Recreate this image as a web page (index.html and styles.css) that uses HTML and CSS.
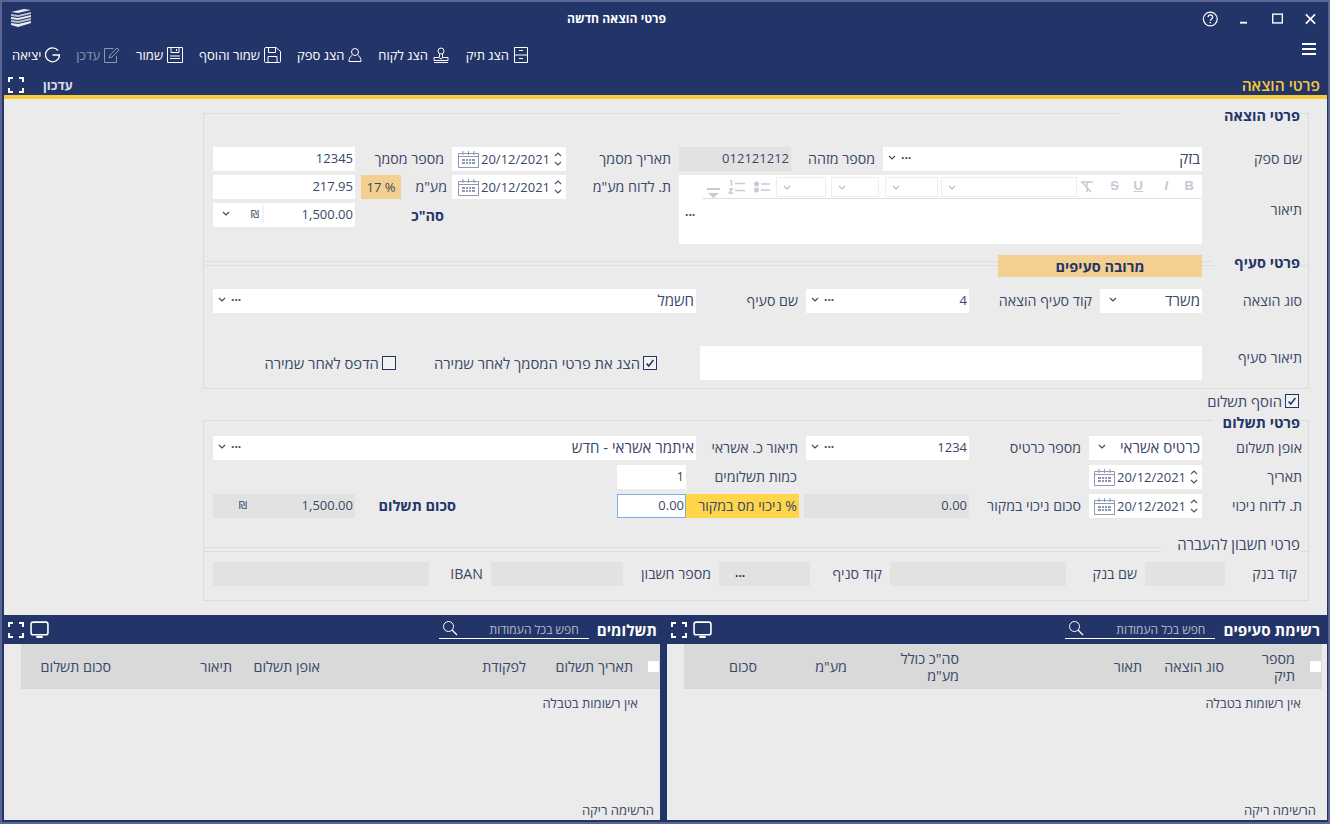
FILE: index.html
```html
<!DOCTYPE html>
<html lang="he" dir="rtl">
<head>
  <meta charset="UTF-8">
  <title>פרטי הוצאה חדשה</title>
  <link rel="stylesheet" href="styles.css">
</head>
<body>
  <svg class="sprites" width="0" height="0">
    <symbol id="i-full" viewBox="0 0 16 16"><path d="M1 5V1h4M11 1h4v4M15 11v4h-4M5 15H1v-4" fill="none" stroke="#fff" stroke-width="2"/></symbol>
    <symbol id="i-screen" viewBox="0 0 18 16"><rect x="1" y="1" width="16" height="12" rx="2" fill="none" stroke="#fff" stroke-width="1.5"/><path d="M6 15h6" stroke="#fff" stroke-width="2"/></symbol>
    <symbol id="i-search" viewBox="0 0 16 16"><circle cx="6.5" cy="6.5" r="5" fill="none" stroke="#fff"/><path d="M10 10l5 5" stroke="#fff" stroke-width="1.2"/></symbol>
    <symbol id="i-cal" viewBox="0 0 21 18"><path d="M.5 3.5h20v14H.5zM.5 6.5h20M5 1v4M10.500 1v4M16 1v4" fill="none" stroke="#8f98b2"/><path d="M4 9h3v2H4zM8 9h2v2H8zM11 9h2v2h-2zM14 9h3v2h-3zM4 12h3v2H4zM8 12h2v2H8zM11 12h2v2h-2zM14 12h3v2h-3z" fill="#8f98b2"/></symbol>
    <symbol id="i-updown" viewBox="0 0 8 16"><path d="M1 5l3-3 3 3M1 11l3 3 3-3" fill="none" stroke="#4a5068" stroke-width="1.100"/></symbol>
    <symbol id="i-chev" viewBox="0 0 8 5"><path d="M1 1l3 3 3-3" fill="none" stroke="#3a4a6b" stroke-width="1.200"/></symbol>
    <symbol id="i-check" viewBox="0 0 14 14"><path d="M3 7.500l2.500 3L11 3.500" fill="none" stroke="#233568" stroke-width="1.800"/></symbol>
    <symbol id="i-save" viewBox="0 0 16 16"><path d="M.5.500h15v15H.5zM4 .500v5h8v-5M9.500 2v2M3 9h10M3 11.500h10" fill="none" stroke="#fff"/></symbol>
  </svg>

  <div class="window">
    <header class="titlebar">
      <svg class="logo" width="20" height="18" viewBox="0 0 20 18">
        <path d="M0 3l13-3 7 1-13 3z" fill="#e8eaf0"/>
        <path d="M0 5l7 1 13-3v2L7 8 0 7z" fill="#b9bfd0"/>
        <path d="M0 8l7 1 13-3v2L7 11 0 10z" fill="#e8eaf0"/>
        <path d="M0 11l7 1 13-3v2L7 14 0 13z" fill="#b9bfd0"/>
        <path d="M0 14l7 1 13-3v2L7 18 0 16z" fill="#e8eaf0"/>
      </svg>
      <div class="wintitle-wrap"><div class="wintitle">פרטי הוצאה חדשה</div></div>
      <div class="winbtns">
        <svg width="14" height="14" viewBox="0 0 14 14"><path d="M2 2l10 10M12 2L2 12" stroke="#fff" stroke-width="1.800"/></svg>
        <svg width="12" height="12" viewBox="0 0 12 12"><rect x=".75" y=".75" width="10.500" height="9.500" fill="none" stroke="#fff" stroke-width="1.500"/></svg>
        <svg class="min" width="8" height="12" viewBox="0 0 8 12"><path d="M0 10h8" stroke="#fff" stroke-width="2"/></svg>
        <svg width="18" height="18" viewBox="0 0 18 18"><circle cx="9" cy="9" r="7.500" fill="none" stroke="#fff" stroke-width="1.300"/><path d="M6.500 7c0-3.300 5-3.300 5 0 0 2-2.500 1.800-2.500 4" fill="none" stroke="#fff" stroke-width="1.300"/><path d="M8.300 12.200h1.400v1.500H8.300z" fill="#fff"/></svg>
      </div>
    </header>

    <nav class="toolbar">
      <svg class="burger" width="14" height="12" viewBox="0 0 14 12"><path d="M0 1h14M0 6h14M0 11h14" stroke="#fff" stroke-width="2"/></svg>
      <div class="tools">
        <a class="tool"><svg width="16" height="16" viewBox="0 0 16 16"><path d="M1.500.500h13v15h-13zM1.500 8h13M6 3.500h4M6 11.500h4" fill="none" stroke="#fff"/></svg>הצג תיק</a>
        <a class="tool"><svg width="18" height="16" viewBox="0 0 18 16"><circle cx="9" cy="4" r="3" fill="none" stroke="#fff"/><path d="M7.500 7v3M10.500 7v3M2 10.500h5l2 1.500 2-1.500h5v3H2zM2 15.500h14" fill="none" stroke="#fff"/></svg>הצג לקוח</a>
        <a class="tool"><svg width="14" height="16" viewBox="0 0 14 16"><circle cx="7" cy="5" r="3.500" fill="none" stroke="#fff"/><path d="M4 8.500C1.500 10 1 12 1 14.500h12c0-2.500-.5-4.500-3-6" fill="none" stroke="#fff"/></svg>הצג ספק</a>
        <a class="tool"><svg width="17" height="16" viewBox="0 0 17 16"><path d="M2 .500h10l4.500 4v10a1 1 0 0 1-1 1H1.500a1 1 0 0 1-1-1V2a1.500 1.500 0 0 1 1.500-1.500zM4.500 .500v5h7v-5M4 15.500v-6h9v6" fill="none" stroke="#fff"/></svg>שמור והוסף</a>
        <a class="tool"><svg width="16" height="16"><use href="#i-save"/></svg>שמור</a>
        <a class="tool tool-off"><svg width="16" height="16" viewBox="0 0 16 16"><path d="M12.500 9v6.500H.5v-14h9" fill="none" stroke="#8d96b3"/><path d="M5 11l1-3 7-7 2 2-7 7z" fill="none" stroke="#8d96b3"/></svg>עדכן</a>
        <a class="tool"><svg width="15" height="16" viewBox="0 0 15 16"><path d="M13 3.500A7 7 0 1 0 14.500 8H7.500" fill="none" stroke="#fff" stroke-width="1.300"/></svg>יציאה</a>
      </div>
    </nav>

    <div class="pagebar">
      <h1 class="pagetitle">פרטי הוצאה</h1>
      <div class="pageactions">
        <span class="update">עדכון</span>
        <svg width="16" height="16"><use href="#i-full"/></svg>
      </div>
    </div>

    <main class="main">
      <section class="box box-expense">
        <h2 class="legend legend-wide">פרטי הוצאה</h2>
        <div class="grid grid-doc">
          <label class="lab">שם ספק</label>
          <div class="field pick"><span class="val heb">בזק</span><span class="dots">···</span><svg class="chev"><use href="#i-chev"/></svg></div>
          <label class="lab pad-s">מספר מזהה</label>
          <div class="field ro"><span class="val">012121212</span></div>
          <label class="lab pad-s">תאריך מסמך</label>
          <div class="field date"><svg class="updown"><use href="#i-updown"/></svg><span dir="ltr">20/12/2021</span><svg class="cal"><use href="#i-cal"/></svg></div>
          <label class="lab pad-s">מספר מסמך</label>
          <div class="field"><span class="val">12345</span></div>

          <label class="lab lab-desc">תיאור</label>
          <div class="editor">
            <div class="editor-bar">
              <span class="fmt fmt-b">B</span><span class="fmt fmt-i">I</span><span class="fmt fmt-u">U</span><span class="fmt fmt-s">S</span>
              <svg class="fmt-clear" width="14" height="12" viewBox="0 0 14 12"><path d="M1 1h12M7 1v10M2 1l9 10" fill="none" stroke="#c6cad6" stroke-width="1.500"/></svg>
              <span class="ed-sel ed-sel-a"><svg class="chev"><use href="#i-chev"/></svg></span>
              <span class="ed-sel ed-sel-b"><svg class="chev"><use href="#i-chev"/></svg></span>
              <span class="ed-sel ed-sel-c"><svg class="chev"><use href="#i-chev"/></svg></span>
              <span class="ed-sel ed-sel-d"><svg class="chev"><use href="#i-chev"/></svg></span>
              <svg class="ed-list" width="16" height="12" viewBox="0 0 16 12"><circle cx="2.500" cy="3" r="2.500" fill="#c6cad6"/><circle cx="2.500" cy="9" r="2.500" fill="#c6cad6"/><path d="M7 3h9M7 9h9" stroke="#c6cad6" stroke-width="1.400"/></svg>
              <svg class="ed-num" width="17" height="14" viewBox="0 0 17 14"><path d="M2 1h1.500v5M1 9h3.500L1 13h4M7 3.500h10M7 10.500h10" fill="none" stroke="#c6cad6" stroke-width="1.300"/></svg>
              <svg class="ed-more" width="13" height="12" viewBox="0 0 13 12"><path d="M0 2h13" stroke="#c6cad6" stroke-width="2"/><path d="M1 6h11l-5.500 5z" fill="#c6cad6"/></svg>
            </div>
            <div class="editor-body"><span class="dots">···</span></div>
          </div>
          <label class="lab pad-s">ת. לדוח מע"מ</label>
          <div class="field date"><svg class="updown"><use href="#i-updown"/></svg><span dir="ltr">20/12/2021</span><svg class="cal"><use href="#i-cal"/></svg></div>
          <label class="lab pad-xs vat-lab">מע"מ</label>
          <div class="vat-rate">% 17</div>
          <div class="field"><span class="val">217.95</span></div>

          <label class="lab pad-s lab-bold total-lab">סה"כ</label>
          <div class="field money total-field"><span class="val">1,500.00</span><span class="nis">₪</span><svg class="chev"><use href="#i-chev"/></svg></div>
        </div>

        <div class="rule rule-item">
          <h2 class="legend">פרטי סעיף</h2>
          <button class="multi">מרובה סעיפים</button>
        </div>

        <div class="grid grid-item">
          <label class="lab">סוג הוצאה</label>
          <div class="field pick"><span class="val heb">משרד</span><svg class="chev chev-far"><use href="#i-chev"/></svg></div>
          <label class="lab pad-s">קוד סעיף הוצאה</label>
          <div class="field pick"><span class="val">4</span><span class="dots">···</span><svg class="chev"><use href="#i-chev"/></svg></div>
          <label class="lab pad-s">שם סעיף</label>
          <div class="field pick"><span class="val heb">חשמל</span><span class="dots">···</span><svg class="chev"><use href="#i-chev"/></svg></div>
        </div>

        <div class="grid grid-item-desc">
          <label class="lab">תיאור סעיף</label>
          <div class="field"></div>
          <div class="checks">
            <label class="check"><span class="tick"><svg width="12" height="12"><use href="#i-check"/></svg></span>הצג את פרטי המסמך לאחר שמירה</label>
            <label class="check"><span class="tick"></span>הדפס לאחר שמירה</label>
          </div>
        </div>
      </section>

      <div class="addpay">
        <label class="check"><span class="tick"><svg width="12" height="12"><use href="#i-check"/></svg></span>הוסף תשלום</label>
      </div>

      <section class="box box-pay">
        <h2 class="legend">פרטי תשלום</h2>
        <div class="grid grid-pay-top">
          <label class="lab">אופן תשלום</label>
          <div class="field pick"><span class="val heb">כרטיס אשראי</span><svg class="chev chev-far"><use href="#i-chev"/></svg></div>
          <label class="lab pad-s">מספר כרטיס</label>
          <div class="field pick"><span class="val">1234</span><span class="dots">···</span><svg class="chev"><use href="#i-chev"/></svg></div>
          <label class="lab pad-s">תיאור כ. אשראי</label>
          <div class="field pick"><span class="val heb">איתמר אשראי - חדש</span><span class="dots">···</span><svg class="chev"><use href="#i-chev"/></svg></div>
        </div>
        <div class="grid grid-pay">
          <label class="lab">תאריך</label>
          <div class="field date"><svg class="updown"><use href="#i-updown"/></svg><span dir="ltr">20/12/2021</span><svg class="cal"><use href="#i-cal"/></svg></div>
          <span class="cell-gap"></span>
          <label class="lab pad-0 col-6">כמות תשלומים</label>
          <div class="field"><span class="val">1</span></div>
          <span class="cell-gap2"></span>

          <label class="lab">ת. לדוח ניכוי</label>
          <div class="field date"><svg class="updown"><use href="#i-updown"/></svg><span dir="ltr">20/12/2021</span><svg class="cal"><use href="#i-cal"/></svg></div>
          <label class="lab pad-s">סכום ניכוי במקור</label>
          <div class="field ro"><span class="val">0.00</span></div>
          <label class="lab pad-0 wht col-6">% ניכוי מס במקור</label>
          <div class="field focus"><span class="val">0.00</span></div>
          <label class="lab lab-bold pad-pay">סכום תשלום</label>
          <div class="field ro money"><span class="val">1,500.00</span><span class="nis nis-ro">₪</span></div>
        </div>

        <div class="rule rule-bank">
          <h2 class="legend legend-plain">פרטי חשבון להעברה</h2>
        </div>

        <div class="grid grid-bank">
          <label class="lab pad-bank">קוד בנק</label>
          <div class="field ro"></div>
          <label class="lab pad-s">שם בנק</label>
          <div class="field ro"></div>
          <label class="lab pad-s">קוד סניף</label>
          <div class="field ro branch"><b>...</b></div>
          <label class="lab pad-s">מספר חשבון</label>
          <div class="field ro"></div>
          <label class="lab pad-s">IBAN</label>
          <div class="field ro"></div>
        </div>
      </section>
    </main>

    <div class="panels">
      <section class="panel panel-items">
        <div class="panelbar">
          <h2 class="panelname">רשימת סעיפים</h2>
          <div class="search"><span>חפש בכל העמודות</span><svg width="16" height="16"><use href="#i-search"/></svg></div>
          <div class="panelicons">
            <svg width="19" height="17"><use href="#i-screen"/></svg>
            <svg width="16" height="16"><use href="#i-full"/></svg>
          </div>
        </div>
        <div class="panelbody">
          <div class="thead thead-items">
            <span class="tbox"></span>
            <span>מספר<br>תיק</span><span>סוג הוצאה</span><span>תאור</span><span>סה"כ כולל<br>מע"מ</span><span>מע"מ</span><span>סכום</span>
          </div>
          <div class="empty">אין רשומות בטבלה</div>
          <div class="listfoot">הרשימה ריקה</div>
        </div>
      </section>
      <section class="panel panel-pays">
        <div class="panelbar">
          <h2 class="panelname">תשלומים</h2>
          <div class="search"><span>חפש בכל העמודות</span><svg width="16" height="16"><use href="#i-search"/></svg></div>
          <div class="panelicons">
            <svg width="19" height="17"><use href="#i-screen"/></svg>
            <svg width="16" height="16"><use href="#i-full"/></svg>
          </div>
        </div>
        <div class="panelbody">
          <div class="thead thead-pays">
            <span class="tbox"></span>
            <span>תאריך תשלום</span><span>לפקודת</span><span>אופן תשלום</span><span>תיאור</span><span>סכום תשלום</span>
          </div>
          <div class="empty">אין רשומות בטבלה</div>
          <div class="listfoot">הרשימה ריקה</div>
        </div>
      </section>
    </div>
  </div>
</body>
</html>
```

FILE: styles.css
```css
html, body {
  margin: 0;
  height: 100%;
  overflow: hidden;
}

body {
  font-family: "Open Sans", "Liberation Sans", sans-serif;
  font-size: 13px;
  color: #3a4868;
}

.sprites { position: absolute; }

.window {
  box-sizing: border-box;
  height: 824px;
  border: 2px solid #5a6594;
  background: #233568;
  display: flex;
  flex-direction: column;
}

/* title bar */
.titlebar {
  height: 33px;
  display: flex;
  align-items: center;
  direction: ltr;
  flex-shrink: 0;
}
.logo { margin-left: 9px; margin-top: -1px; }
.wintitle-wrap { flex: 1; text-align: center; }
.wintitle { font-size: 12.200px; font-weight: 700; color: #fff; direction: rtl; }
.winbtns {
  direction: rtl;
  display: flex;
  align-items: center;
  width: 126px;
  box-sizing: border-box;
  padding-right: 11px;
  gap: 21px;
}
.winbtns .min { margin-right: 4px; }

/* toolbar */
.toolbar {
  height: 40px;
  display: flex;
  align-items: center;
  flex-shrink: 0;
  padding: 0 12px 0 10px;
}
.burger { margin-top: -12px; }
.tools {
  margin-right: auto;
  display: flex;
  gap: 16px;
}
.tool {
  display: flex;
  align-items: center;
  gap: 4px;
  color: #fff;
  font-size: 13px;
}
.tool-off { color: #8d96b3; }

.pagebar {
  height: 20px;
  display: flex;
  align-items: center;
  justify-content: space-between;
  padding: 0 8px 0 6px;
  flex-shrink: 0;
}
.pagetitle {
  margin: 0;
  font-size: 15.500px;
  font-weight: 600;
  color: #f6c93a;
}
.pageactions {
  display: flex;
  align-items: center;
  gap: 19px;
}
.update { font-size: 13px; font-weight: 700; color: #d5d9e6; }

/* form area */
.main {
  flex: 1;
  min-height: 0;
  margin: 0 1px 0 2px;
  border-top: 4px solid #f6c93a;
  background: #ebebeb;
  padding: 14px 18px 0 199px;
}

.box {
  position: relative;
  border: 1px solid #dcdcdc;
}
.box-expense { padding: 33px 0 8px 9px; }
.box-pay { margin-top: 12px; padding: 15px 0 14px 9px; }

.legend {
  position: absolute;
  top: -6px;
  right: 8px;
  margin: 0;
  padding: 0 0 0 10px;
  background: #ebebeb;
  font-size: 14.500px;
  line-height: 15px;
  font-weight: 700;
  color: #233568;
}
.legend-wide { padding-left: 104px; }
.legend-plain {
  top: -10px;
  padding-left: 16px;
  font-size: 15px;
  font-weight: 400;
  color: #3a4868;
}

/* double line that splits a box, the upper line stops before the legend */
.rule {
  position: relative;
  height: 4px;
  margin-left: -9px;
  border-bottom: 1px solid #dcdcdc;
}
.rule::before {
  content: "";
  position: absolute;
  top: 0;
  left: 0;
  right: 96px;
  border-top: 1px solid #dcdcdc;
}
.rule-bank::before { right: 148px; }
.rule-item { margin-top: 17px; margin-bottom: 23px; }
.rule-bank { margin-top: 29px; margin-bottom: 10px; }
.rule-item .legend { top: -6px; padding-left: 20px; }

.multi {
  position: absolute;
  top: -6px;
  right: 106px;
  width: 204px;
  height: 22px;
  border: 0;
  padding: 0;
  background: #f3d08f;
  font-family: inherit;
  font-size: 14.500px;
  font-weight: 700;
  color: #233568;
}

.grid {
  display: grid;
  grid-auto-rows: 24px;
  align-items: stretch;
}
.grid-doc {
  grid-template-columns: 106px 319px 92px 112px 113px 114px 97px 142px;
  grid-template-rows: 24px 24px 24px 13px;
  gap: 4px 0;
}
.grid-item { grid-template-columns: 106px 102px 131px 163px 110px 483px; }
.grid-item-desc {
  grid-template-columns: 106px 502px 1fr;
  grid-auto-rows: 34px;
  margin-top: 33px;
}
.grid-pay-top { grid-template-columns: 106px 113px 120px 163px 110px 483px; }
.grid-pay {
  grid-template-columns: 106px 113px 120px 165px 5px 113px 69px 262px 142px;
  gap: 5px 0;
  margin-top: 5px;
}
.grid-bank { grid-template-columns: 83px 80px 79px 176px 80px 91px 96px 132px 62px 216px; }

.lab {
  padding-right: 6px;
  font-size: 14.200px;
  line-height: 24px;
  white-space: nowrap;
}
.pad-0 { padding-right: 2px; }
.pad-xs { padding-right: 5px; }
.pad-s { padding-right: 8px; }
.pad-bank { padding-right: 11px; }
.pad-pay { padding-right: 161px; }
.lab-bold { font-weight: 700; color: #233568; font-size: 14.500px; }

.lab-desc { grid-row: 2 / 5; grid-column: 1; align-self: center; }
.editor { grid-row: 2 / 5; grid-column: 2 / 5; }
.total-lab { grid-row: 3; grid-column: 7; line-height: 26px; }
.total-field { grid-row: 3; grid-column: 8; }
.vat-lab { grid-column: 7; grid-row: 2; }
.vat-rate {
  grid-column: 7;
  grid-row: 2;
  justify-self: end;
  width: 40px;
  margin-left: 6px;
  background: #f3d08f;
  text-align: center;
  line-height: 24px;
  font-size: 13px;
}

.col-6 { grid-column: 6; }
.cell-gap { grid-column: 3 / 6; }
.cell-gap2 { grid-column: 8 / 10; }

.wht { background: #ffd54a; }

.field {
  display: flex;
  align-items: center;
  background: #fff;
  min-width: 0;
  padding: 0 2px 3px 3px;
  box-sizing: border-box;
}
.val { flex: 1; font-size: 13px; white-space: nowrap; }
.heb { font-size: 15px; }
.ro { background: #e2e2e2; }
.focus {
  border: 1px solid #7ab0e8;
  padding-right: 1px;
  padding-bottom: 2px;
}
.dots {
  font-size: 12px;
  font-weight: 700;
  line-height: 1;
  margin-left: 5px;
}
.chev { width: 8px; height: 5px; margin-left: 2px; flex-shrink: 0; }
.chev-far { margin-left: 6px; }

.date { padding: 0 4px 0 5px; font-size: 13px; }
.date .updown { width: 8px; height: 16px; margin-left: 4px; }
.date .cal { width: 21px; height: 18px; margin-right: 2px; }
.date span { line-height: 1; }

.money .val { flex: 0 0 auto; width: 89px; text-align: right; border-left: 2px solid #f2f2f2; }
.money .nis { font-size: 10.500px; font-family: "DejaVu Sans", sans-serif; margin-right: 3px; flex: 1; }
.money .chev { margin-left: 6px; }
.ro.money .val { width: 97px; border: 0; }
.money .nis-ro { margin-right: 9px; }

.branch b { margin-right: auto; margin-left: 13px; font-size: 12px; color: #233568; }

/* rich text editor */
.editor {
  background: #fff;
  display: flex;
  flex-direction: column;
}
.editor-bar {
  position: relative;
  height: 24px;
  flex-shrink: 0;
}
.editor-bar > * { position: absolute; }
.editor-bar::after {
  content: "";
  position: absolute;
  bottom: 0;
  left: 23px;
  right: 0;
  border-bottom: 1px solid #dcdfe6;
}
.fmt {
  top: 2px;
  font-size: 13px;
  font-weight: 700;
  color: #c6cad6;
  line-height: 18px;
  font-family: "Liberation Sans", sans-serif;
}
.fmt-b { right: 8px; }
.fmt-i { right: 34px; font-style: italic; }
.fmt-u { right: 59px; text-decoration: underline; }
.fmt-s { right: 83px; text-decoration: line-through; }
.fmt-clear { top: 6px; right: 108px; }
.ed-sel {
  top: 2px;
  height: 20px;
  box-sizing: border-box;
  border: 1px solid #eceef2;
  display: flex;
  align-items: center;
  justify-content: flex-end;
  padding-left: 3px;
}
.ed-sel .chev { margin-left: 3px; opacity: .35; }
.ed-sel-a { right: 125px; width: 136px; }
.ed-sel-b { right: 264px; width: 53px; }
.ed-sel-c { right: 323px; width: 48px; }
.ed-sel-d { right: 376px; width: 50px; }
.ed-list { top: 6px; right: 432px; }
.ed-num { top: 5px; right: 457px; }
.ed-more { top: 12px; right: 482px; }
.editor-body {
  flex: 1;
  padding-top: 6px;
  text-align: left;
}
.editor-body .dots { margin-left: 6px; }

/* check boxes */
.checks {
  display: flex;
  align-items: center;
  gap: 38px;
  padding-right: 43px;
}
.check {
  display: flex;
  align-items: center;
  gap: 3px;
  font-size: 14.800px;
  line-height: 14px;
  white-space: nowrap;
}
.tick {
  box-sizing: border-box;
  width: 14px;
  height: 14px;
  border: 1px solid #233568;
  background: #f2f2f2;
  display: flex;
  align-items: center;
  justify-content: center;
}
.addpay {
  height: 14px;
  margin-top: 5px;
  padding-right: 10px;
  display: flex;
}

/* bottom panels */
.panels {
  height: 207px;
  flex-shrink: 0;
  display: grid;
  grid-template-columns: 660px 656px;
  gap: 7px;
  padding: 0 1px 2px 2px;
  box-sizing: border-box;
}
.panel { display: flex; flex-direction: column; min-width: 0; }
.panelbar {
  height: 29px;
  display: flex;
  align-items: center;
  flex-shrink: 0;
  padding-right: 3px;
}
.panel-items .panelbar { padding-right: 7px; }
.panelname { margin: 0; font-size: 15.200px; font-weight: 700; color: #fff; }
.search {
  display: flex;
  align-items: center;
  justify-content: space-between;
  width: 150px;
  height: 19px;
  margin-right: 8px;
  border-bottom: 1px solid #fff;
  padding: 0 10px 0 3px;
  box-sizing: border-box;
  font-size: 12px;
  color: #b4bacd;
}
.search svg { margin-top: -3px; }
.panelicons {
  margin-right: auto;
  margin-left: 4px;
  display: flex;
  align-items: center;
  gap: 6px;
}
.panelbody {
  flex: 1;
  background: #ebebeb;
  display: flex;
  flex-direction: column;
  padding-left: 17px;
}
.thead {
  height: 45px;
  background: #d9d9d9;
  display: grid;
  align-items: center;
  font-size: 14.300px;
  line-height: 17px;
  flex-shrink: 0;
}
.thead-items { grid-template-columns: 27px 71px 82px 183px 112px 90px 73px; margin-right: 5px; }
.thead-pays { grid-template-columns: 27px 107px 206px 88px 121px 90px; }
.tbox {
  width: 11px;
  height: 11px;
  background: #fff;
  margin-right: 1px;
}
.empty {
  margin-top: 7px;
  padding-right: 22px;
  font-size: 13px;
  line-height: 15px;
}
.panel-items .empty { padding-right: 26px; }
.listfoot {
  margin-top: auto;
  padding: 0 6px 2px 0;
  font-size: 13px;
  line-height: 15px;
}
.panel-items .listfoot { padding-right: 11px; }
```
